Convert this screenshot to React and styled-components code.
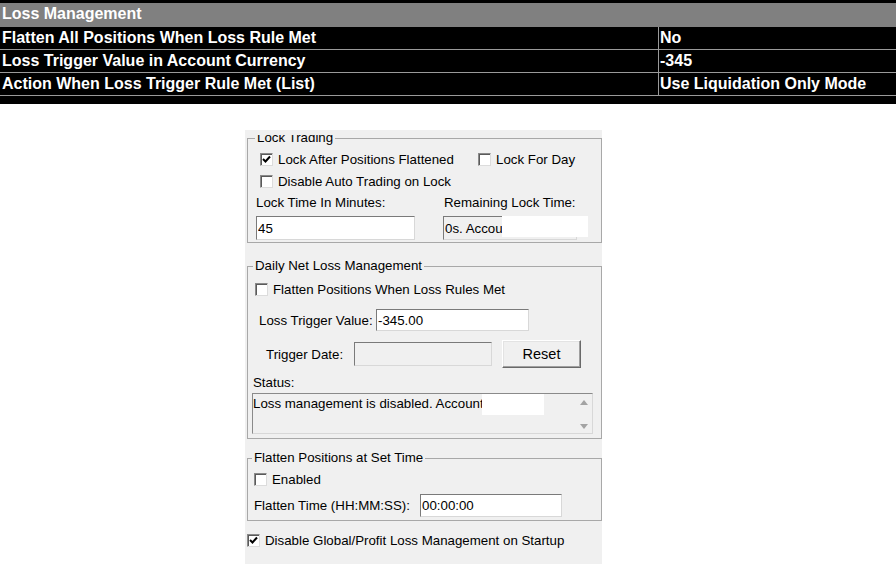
import React from 'react'
import styled, { createGlobalStyle } from 'styled-components'

const GlobalStyle = createGlobalStyle`
  html, body {
    margin: 0;
    padding: 0;
    background: #fff;
  }
  body {
    font-family: "Liberation Sans", Arial, sans-serif;
  }
`;

const Table = styled.div`
  background: #000;
  padding: 3px 0 8px;
  color: #fff;
  font: bold 16px "Liberation Sans", Arial, sans-serif;
`;

const HeaderRow = styled.div`
  background: #808080;
  height: 24px;
  line-height: 21px;
  padding-left: 2px;
`;

const Row = styled.div`
  display: grid;
  grid-template-columns: 658px 1fr;
  height: 22px;
  border-bottom: 1px solid #9a9a9a;
`;

const Cell = styled.div`
  line-height: 21px;
  padding-left: ${p => (p.$value ? '1px' : '2px')};
  border-left: ${p => (p.$value ? '1px solid #9a9a9a' : 'none')};
  white-space: nowrap;
  overflow: hidden;
`;

const Panel = styled.div`
  width: 357px;
  margin: 26px 0 0 245px;
  padding: 5px 0 13px;
  background: #f0f0f0;
  color: #000;
  font-size: 13.3px;
`;

const Viewport = styled.div`
  overflow: hidden;
`;

const Group = styled.fieldset`
  margin: ${p => p.$mt}px 0 0 2px;
  width: 355px;
  box-sizing: border-box;
  padding: 0 0 ${p => p.$pb}px;
  min-width: 0;
  border: 1px solid #a8a8a8;
`;

const Legend = styled.legend`
  margin-left: ${p => p.$ml}px;
  padding: 0 2px;
  line-height: 16px;
  font-size: 13.3px;
`;

const Line = styled.div`
  display: flex;
  align-items: center;
  height: ${p => p.$h}px;
  margin-top: ${p => p.$mt || 0}px;
  padding-left: ${p => p.$pl || 0}px;
  white-space: nowrap;
`;

const Columns = styled.div`
  display: grid;
  grid-template-columns: 187px 1fr;
  align-items: center;
  height: ${p => p.$h}px;
  margin-top: ${p => p.$mt || 0}px;
  padding-left: ${p => p.$pl || 0}px;
  white-space: nowrap;
`;

const Label = styled.span`
  display: inline-block;
  width: ${p => (p.$w ? `${p.$w}px` : 'auto')};
  padding-left: ${p => p.$pl || 0}px;
`;

const CheckItem = styled.label`
  display: flex;
  align-items: center;
  gap: 5px;
  width: ${p => (p.$w ? `${p.$w}px` : 'auto')};
`;

const Box = styled.span`
  display: inline-flex;
  align-items: center;
  justify-content: center;
  width: 13px;
  height: 13px;
  box-sizing: border-box;
  background: #fff;
  border: 1px solid;
  border-color: #8a8a8a #dcdcdc #dcdcdc #8a8a8a;
  box-shadow: inset 1px 1px 0 #5a5a5a;
`;

const TextBox = styled.input`
  width: ${p => p.$w}px;
  height: ${p => p.$h}px;
  box-sizing: border-box;
  margin: 0;
  padding: 0 1px;
  font: 13.3px "Liberation Sans", Arial, sans-serif;
  color: #000;
  background: ${p => (p.readOnly ? '#f0f0f0' : '#fff')};
  border: 1px solid;
  border-color: #7a7a7a #d8d8d8 #d8d8d8 #7a7a7a;
  outline: none;
`;

const Holder = styled.div`
  position: relative;
`;

const Redact = styled.div`
  position: absolute;
  left: ${p => p.$x}px;
  top: ${p => p.$y}px;
  width: ${p => p.$w}px;
  height: ${p => p.$h}px;
  background: #fff;
`;

const Button = styled.button`
  width: 79px;
  height: 28px;
  margin: 0 0 0 10px;
  padding: 0;
  font: 14.5px "Liberation Sans", Arial, sans-serif;
  color: #000;
  background: #f0f0f0;
  border: 1px solid;
  border-color: #fff #696969 #696969 #fff;
  box-shadow: inset -1px -1px 0 #a0a0a0, inset 1px 1px 0 #e3e3e3;
`;

const StatusBox = styled.div`
  position: relative;
  display: flex;
  width: 341px;
  height: 41px;
  margin: 3px 0 0 4px;
  box-sizing: border-box;
  background: #f0f0f0;
  border: 1px solid;
  border-color: #8a8a8a #d8d8d8 #d8d8d8 #8a8a8a;
`;

const StatusText = styled.div`
  flex: 1;
  padding-top: 2px;
  line-height: 16px;
  white-space: nowrap;
  overflow: hidden;
`;

const ScrollBar = styled.div`
  width: 16px;
  display: flex;
  flex-direction: column;
  justify-content: space-between;
  align-items: center;
  padding: 6px 0 4px;
`;

const Tick = () => (
  <svg width="9" height="9" viewBox="0 0 9 9">
    <polyline points="1,4 3.5,6.5 8,1.5" fill="none" stroke="#000" strokeWidth="2" />
  </svg>
);

const Arrow = ({ down }) => (
  <svg width="8" height="5" viewBox="0 0 8 5">
    <polygon points={down ? '0,0 8,0 4,5' : '0,5 8,5 4,0'} fill="#a3a3a3" />
  </svg>
);

const Check = ({ checked, label, w }) => (
  <CheckItem $w={w}>
    <Box>{checked && <Tick />}</Box>
    <span>{label}</span>
  </CheckItem>
);

const rows = [
  ['Flatten All Positions When Loss Rule Met', 'No'],
  ['Loss Trigger Value in Account Currency', '-345'],
  ['Action When Loss Trigger Rule Met (List)', 'Use Liquidation Only Mode'],
];

export default function App() {
  return (
    <>
      <GlobalStyle />
      <Table>
        <HeaderRow>Loss Management</HeaderRow>
        {rows.map(([name, value]) => (
          <Row key={name}>
            <Cell>{name}</Cell>
            <Cell $value>{value}</Cell>
          </Row>
        ))}
      </Table>

      <Panel>
        <Viewport>
          <Group $mt={-5} $pb={2}>
            <Legend $ml={7}>Lock Trading</Legend>
            <Line $h={22} $mt={2} $pl={12}>
              <Check checked label="Lock After Positions Flattened" w={218} />
              <Check label="Lock For Day" />
            </Line>
            <Line $h={22} $pl={12}>
              <Check label="Disable Auto Trading on Lock" />
            </Line>
            <Columns $h={20} $pl={8}>
              <Label>Lock Time In Minutes:</Label>
              <Label $pl={1}>Remaining Lock Time:</Label>
            </Columns>
            <Columns $h={24} $mt={4} $pl={8}>
              <TextBox $w={159} $h={24} defaultValue="45" />
              <Holder>
                <TextBox $w={134} $h={24} readOnly value="0s. Account" />
                <Redact $x={59} $y={0} $w={86} $h={21} />
              </Holder>
            </Columns>
          </Group>

          <Group $mt={15} $pb={4}>
            <Legend $ml={5}>Daily Net Loss Management</Legend>
            <Line $h={22} $mt={4} $pl={7}>
              <Check label="Flatten Positions When Loss Rules Met" />
            </Line>
            <Line $h={22} $mt={9} $pl={11}>
              <Label $w={117}>Loss Trigger Value:</Label>
              <TextBox $w={153} $h={22} defaultValue="-345.00" />
            </Line>
            <Line $h={28} $mt={9} $pl={18}>
              <Label $w={88}>Trigger Date:</Label>
              <TextBox $w={138} $h={24} readOnly value="" />
              <Button>Reset</Button>
            </Line>
            <Line $h={16} $mt={6} $pl={5}>
              <Label>Status:</Label>
            </Line>
            <StatusBox>
              <StatusText>Loss management is disabled. Account</StatusText>
              <ScrollBar>
                <Arrow />
                <Arrow down />
              </ScrollBar>
              <Redact $x={229} $y={0} $w={62} $h={21} />
            </StatusBox>
          </Group>

          <Group $mt={11} $pb={3}>
            <Legend $ml={4}>Flatten Positions at Set Time</Legend>
            <Line $h={22} $mt={2} $pl={6}>
              <Check label="Enabled" />
            </Line>
            <Line $h={23} $mt={4} $pl={6}>
              <Label $w={166}>Flatten Time (HH:MM:SS):</Label>
              <TextBox $w={142} $h={23} defaultValue="00:00:00" />
            </Line>
          </Group>

          <Line $h={22} $mt={8} $pl={2}>
            <Check checked label="Disable Global/Profit Loss Management on Startup" />
          </Line>
        </Viewport>
      </Panel>
    </>
  )
}
